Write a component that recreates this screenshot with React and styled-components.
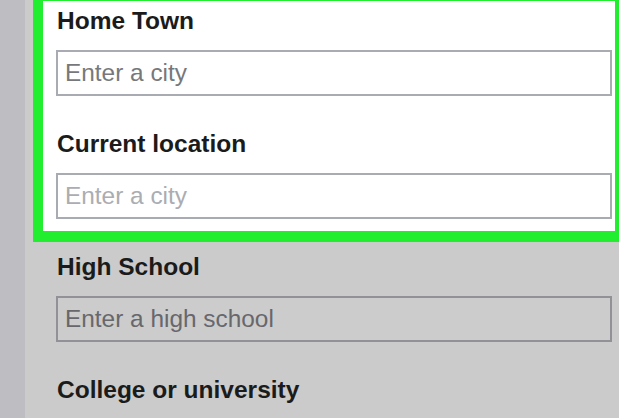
import React from 'react';
import styled, { createGlobalStyle } from 'styled-components';

const GlobalStyle = createGlobalStyle`
  html, body {
    margin: 0;
    padding: 0;
    background: #cbcbcb;
  }
  body {
    width: 619px;
    height: 418px;
    overflow: hidden;
    font-family: "Liberation Sans", Arial, sans-serif;
  }
`;

const Page = styled.div`
  display: flex;
  width: 619px;
  height: 418px;
  overflow: hidden;
`;

const Gutter = styled.div`
  flex: 0 0 25px;
  background: #bebec2;
`;

const Main = styled.div`
  flex: 1;
  min-width: 0;
  padding-left: 8px;
  background: #cbcbcb;
`;

const Highlight = styled.div`
  margin-top: -9px;
  margin-right: -6px;
  border: 10px solid #22ee30;
  border-bottom-width: 11px;
  background: #ffffff;
  padding: 6px 3px 12px 13px;
`;

const Section = styled.div`
  padding: 11px 3px 0 23px;
`;

const Field = styled.div`
  display: flex;
  flex-direction: column;
  & + & {
    margin-top: 34px;
  }
`;

const Label = styled.label`
  font-size: 24.5px;
  line-height: 28px;
  font-weight: bold;
  color: #1b1b1b;
  margin-left: 1px;
`;

const Input = styled.input`
  box-sizing: border-box;
  width: 556px;
  height: 46px;
  margin-top: 15px;
  padding: 0 7px;
  border: 2px solid ${p => p.$border};
  background: ${p => p.$bg};
  font-family: "Liberation Sans", Arial, sans-serif;
  font-size: 24.4px;
  outline: none;

  &::placeholder {
    color: ${p => p.$hint};
    opacity: 1;
  }
`;

const fields = [
  { label: 'Home Town', hint: 'Enter a city', color: '#76787c' },
  { label: 'Current location', hint: 'Enter a city', color: '#abadb1' },
];

export default function App() {
  return (
    <>
      <GlobalStyle />
      <Page>
        <Gutter />
        <Main>
          <Highlight>
            {fields.map(f => (
              <Field key={f.label}>
                <Label>{f.label}</Label>
                <Input
                  placeholder={f.hint}
                  $hint={f.color}
                  $border="#a8abb2"
                  $bg="#ffffff"
                />
              </Field>
            ))}
          </Highlight>
          <Section>
            <Field>
              <Label>High School</Label>
              <Input
                placeholder="Enter a high school"
                $hint="#67676c"
                $border="#919197"
                $bg="#cccccc"
              />
            </Field>
            <Field>
              <Label>College or university</Label>
            </Field>
          </Section>
        </Main>
      </Page>
    </>
  );
}
